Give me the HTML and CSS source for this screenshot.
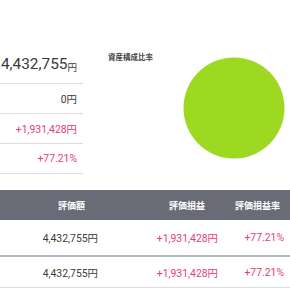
FILE: index.html
```html
<!DOCTYPE html>
<html lang="ja">
<head>
  <meta charset="UTF-8" />
  <meta name="viewport" content="width=device-width, initial-scale=1.0" />
  <title>資産状況</title>
  <link rel="stylesheet" href="styles.css">
</head>
<body>
  <section class="summary">
    <div class="totals">
      <div class="row row-main"><span class="big">4,432,755</span><span class="yen-s">円</span></div>
      <div class="row">0円</div>
      <div class="row plus">+1,931,428円</div>
      <div class="row plus">+77.21%</div>
    </div>
    <div class="chart">
      <div class="chart-title">資産構成比率</div>
      <svg class="pie" width="102" height="102" viewBox="0 0 102 102">
        <circle cx="51" cy="51" r="50.5" fill="#9ed922" />
      </svg>
    </div>
  </section>

  <table class="holdings">
    <colgroup>
      <col class="c1">
      <col class="c2">
      <col class="c3">
    </colgroup>
    <thead>
      <tr>
        <th class="h1">評価額</th>
        <th class="h2">評価損益</th>
        <th class="h3">評価損益率</th>
      </tr>
    </thead>
    <tbody>
      <tr class="first">
        <td>4,432,755円</td>
        <td class="plus">+1,931,428円</td>
        <td class="plus">+77.21%</td>
      </tr>
      <tr>
        <td>4,432,755円</td>
        <td class="plus">+1,931,428円</td>
        <td class="plus">+77.21%</td>
      </tr>
    </tbody>
  </table>
</body>
</html>
```

FILE: styles.css
```css
body {
  margin: 0;
  padding: 0;
  background-color: #fff;
  color: #3a3a3a;
  font-family: Roboto, "Noto Sans CJK JP", sans-serif;
  width: 290px;
  overflow: hidden;
}
.summary {
  display: flex;
  padding-top: 51px;
  height: 139px;
}
.totals {
  width: 83px;
  flex: none;
}
.row {
  height: 29px;
  border-bottom: 1px solid #dcdce2;
  display: flex;
  align-items: center;
  justify-content: flex-end;
  padding-right: 6px;
  font-size: 10.4px;
}
.row-main {
  height: 32px;
  align-items: flex-end;
  line-height: 1;
}
.row-main .big {
  font-size: 15.4px;
  margin-bottom: 11px;
}
.row-main .yen-s {
  font-size: 9.5px;
  margin-bottom: 11px;
}
.plus {
  color: #ea3a74;
}
.chart {
  flex: 1;
  display: flex;
  padding-left: 25px;
  padding-right: 5px;
}
.chart-title {
  font-family: "Noto Sans CJK JP", sans-serif;
  font-size: 7.5px;
  font-weight: bold;
  color: #444;
  line-height: 10px;
  margin-top: 1px;
}
.pie {
  margin-left: auto;
  margin-top: 6px;
}
.holdings {
  width: 290px;
  border-collapse: collapse;
  table-layout: fixed;
}
.c1 { width: 104px; }
.c2 { width: 120px; }
.c3 { width: 66px; }
.holdings th {
  background-color: #696c76;
  color: #fff;
  font-family: "Noto Sans CJK JP", sans-serif;
  font-size: 9px;
  font-weight: bold;
  height: 30px;
  padding: 0;
  text-align: right;
}
.holdings th.h1 { padding-right: 19px; }
.holdings th.h2 { padding-right: 19px; }
.holdings th.h3 { padding-right: 10px; }
.holdings td {
  font-size: 10.4px;
  text-align: right;
  padding: 0 6px 0 0;
  height: 30px;
  border-bottom: 1px solid #dcdce2;
}
.holdings tr.first td {
  height: 35px;
  border-bottom: 2px solid #b3b8c6;
}
```
